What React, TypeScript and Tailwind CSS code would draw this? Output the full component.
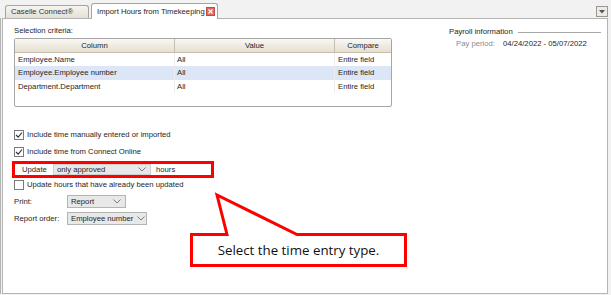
import React from "react";

const ui = { fontFamily: '"Liberation Sans", Arial, sans-serif' };

function Chevron() {
  return (
    <svg width="8" height="5" viewBox="0 0 8 5" className="shrink-0">
      <path d="M0.5 0.5 L4 4 L7.5 0.5" fill="none" stroke="#707070" strokeWidth="0.9" />
    </svg>
  );
}

function Check({ checked }: { checked: boolean }) {
  return (
    <div className="w-[10px] h-[10px] border border-[#7a7a7a] bg-white flex items-center justify-center shrink-0">
      {checked && (
        <svg width="8" height="8" viewBox="0 0 8 8">
          <path d="M1 4 L3.2 6.2 L7 1.5" fill="none" stroke="#303030" strokeWidth="1.1" />
        </svg>
      )}
    </div>
  );
}

function Select({ text, w, cls = "" }: { text: string; w: string; cls?: string }) {
  return (
    <div className={`${w} ${cls} flex items-center justify-between gap-[4px] bg-[#e8e8e8] border border-[#b4b4b4] pl-[3px] pr-[4px] whitespace-nowrap`}>
      <span>{text}</span>
      <Chevron />
    </div>
  );
}

export default function App() {
  const rows = [
    ["Employee.Name", "All", "Entire field", false],
    ["Employee.Employee number", "All", "Entire field", true],
    ["Department.Department", "All", "Entire field", false],
  ] as const;
  return (
    <div className="w-[611px] h-[295px] relative bg-[#f2f2f2] overflow-hidden text-[7.7px] leading-[10px] text-[#1e1e1e]" style={ui}>
      {/* tab strip */}
      <div className="h-[18px] flex items-end pl-[5px] pr-[3px]">
        <div className="w-[84px] h-[13px] border border-b-0 border-[#a9a49a] rounded-t-[3px] bg-gradient-to-b from-[#f7f5f0] to-[#e4e0d7] flex items-center pl-[5px] text-[#333]">
          Caselle Connect®
        </div>
        <div className="w-[127px] h-[16px] ml-[2px] border border-b-0 border-[#a9a49a] rounded-t-[3px] bg-white flex items-center pl-[5px] pr-[2px] justify-between relative top-[1px] z-10">
          <span className="pt-[1px]">Import Hours from Timekeeping</span>
          <div className="w-[9px] h-[9px] bg-[#e26a64] border border-[#c44a44] flex items-center justify-center">
            <svg width="5" height="5" viewBox="0 0 5 5">
              <path d="M0.5 0.5 L4.5 4.5 M4.5 0.5 L0.5 4.5" stroke="#fff" strokeWidth="1.1" />
            </svg>
          </div>
        </div>
        <div className="flex-1" />
        <div className="w-[12px] h-[11px] mb-[1px] border border-[#9a968e] bg-[#ecebe7] flex items-center justify-center">
          <svg width="6" height="4" viewBox="0 0 6 4">
            <path d="M0 0 H6 L3 3.5 Z" fill="#555" />
          </svg>
        </div>
      </div>

      {/* panel */}
      <div className="w-[608px] h-[276px] border-l border-[#b4b4b4]">
        <div className="ml-[1px] h-full border border-[#b4b4b4] bg-white flex">
          {/* left column */}
          <div className="w-[400px] pl-[11px] pt-[7px] flex flex-col">
            <div>Selection criteria:</div>
            <div className="mt-[2px] w-[378px] h-[69px] border border-[#a6a6a6] rounded-[2px]">
              <div className="h-[14px] flex bg-gradient-to-b from-[#faf8f4] to-[#e6dfd1] border-b border-[#c7bfae]">
                <div className="w-[160px] border-r border-[#c7bfae] flex items-center justify-center">Column</div>
                <div className="w-[160px] border-r border-[#c7bfae] flex items-center justify-center">Value</div>
                <div className="flex-1 flex items-center justify-center">Compare</div>
              </div>
              {rows.map(([a, b, c, sel], i) => (
                <div key={i} className={`flex ${i === 1 ? "h-[14px]" : "h-[13px]"} ${sel ? "bg-[#dce6f6]" : ""}`}>
                  <div className="w-[160px] border-r border-[#ececec] flex items-center pl-[3px]">{a}</div>
                  <div className="w-[160px] border-r border-[#ececec] flex items-center pl-[2px]">{b}</div>
                  <div className="flex-1 flex items-center pl-[3px]">{c}</div>
                </div>
              ))}
            </div>

            <div className="mt-[21px] h-[14px] flex items-center gap-[3px]">
              <Check checked />
              <span>Include time manually entered or imported</span>
            </div>
            <div className="mt-[3px] h-[14px] flex items-center gap-[3px]">
              <Check checked />
              <span>Include time from Connect Online</span>
            </div>
            <div className="mt-[2px] -ml-[2px] w-[202px] h-[17px] border-[3px] border-[#ff0000] flex items-stretch">
              <div className="w-[38px] pl-[7px] flex items-center">Update</div>
              <Select text="only approved" w="w-[98px]" cls="border-[#d0d0d0] bg-[#e6e6e6]" />
              <div className="ml-[5px] flex items-center">hours</div>
            </div>
            <div className="h-[14px] flex items-center gap-[3px]">
              <Check checked={false} />
              <span>Update hours that have already been updated</span>
            </div>
            <div className="mt-[3px] h-[13px] flex items-stretch">
              <div className="w-[53px] flex items-center">Print:</div>
              <Select text="Report" w="w-[59px]" />
            </div>
            <div className="mt-[4px] h-[13px] flex items-stretch">
              <div className="w-[53px] flex items-center whitespace-nowrap">Report order:</div>
              <Select text="Employee number" w="w-[80px]" />
            </div>
          </div>

          {/* right column */}
          <div className="ml-[46px] w-[152px] pt-[8px] flex flex-col">
            <div className="flex items-center">
              <span>Payroll information</span>
              <div className="flex-1 h-px bg-[#a8a8a8] ml-[5px]" />
            </div>
            <div className="mt-[2px] flex pl-[7px]">
              <span className="w-[47px] text-[#8a8a8a]">Pay period:</span>
              <span>04/24/2022 - 05/07/2022</span>
            </div>
          </div>
        </div>
      </div>

      {/* callout annotation */}
      <svg className="absolute left-0 top-0" width="611" height="295" viewBox="0 0 611 295">
        <path
          d="M191.5 234.5 H227 L217 195 L297 234.5 H405.5 V265.5 H191.5 Z"
          fill="#ffffff"
          stroke="#ff0000"
          strokeWidth="3"
        />
      </svg>
      <div
        className="absolute left-[193px] top-[236px] w-[211px] h-[28px] flex items-center justify-center text-[13.3px] text-[#111]"
        style={{ fontFamily: '"Open Sans", "Noto Sans", sans-serif' }}
      >
        Select the time entry type.
      </div>
    </div>
  );
}
